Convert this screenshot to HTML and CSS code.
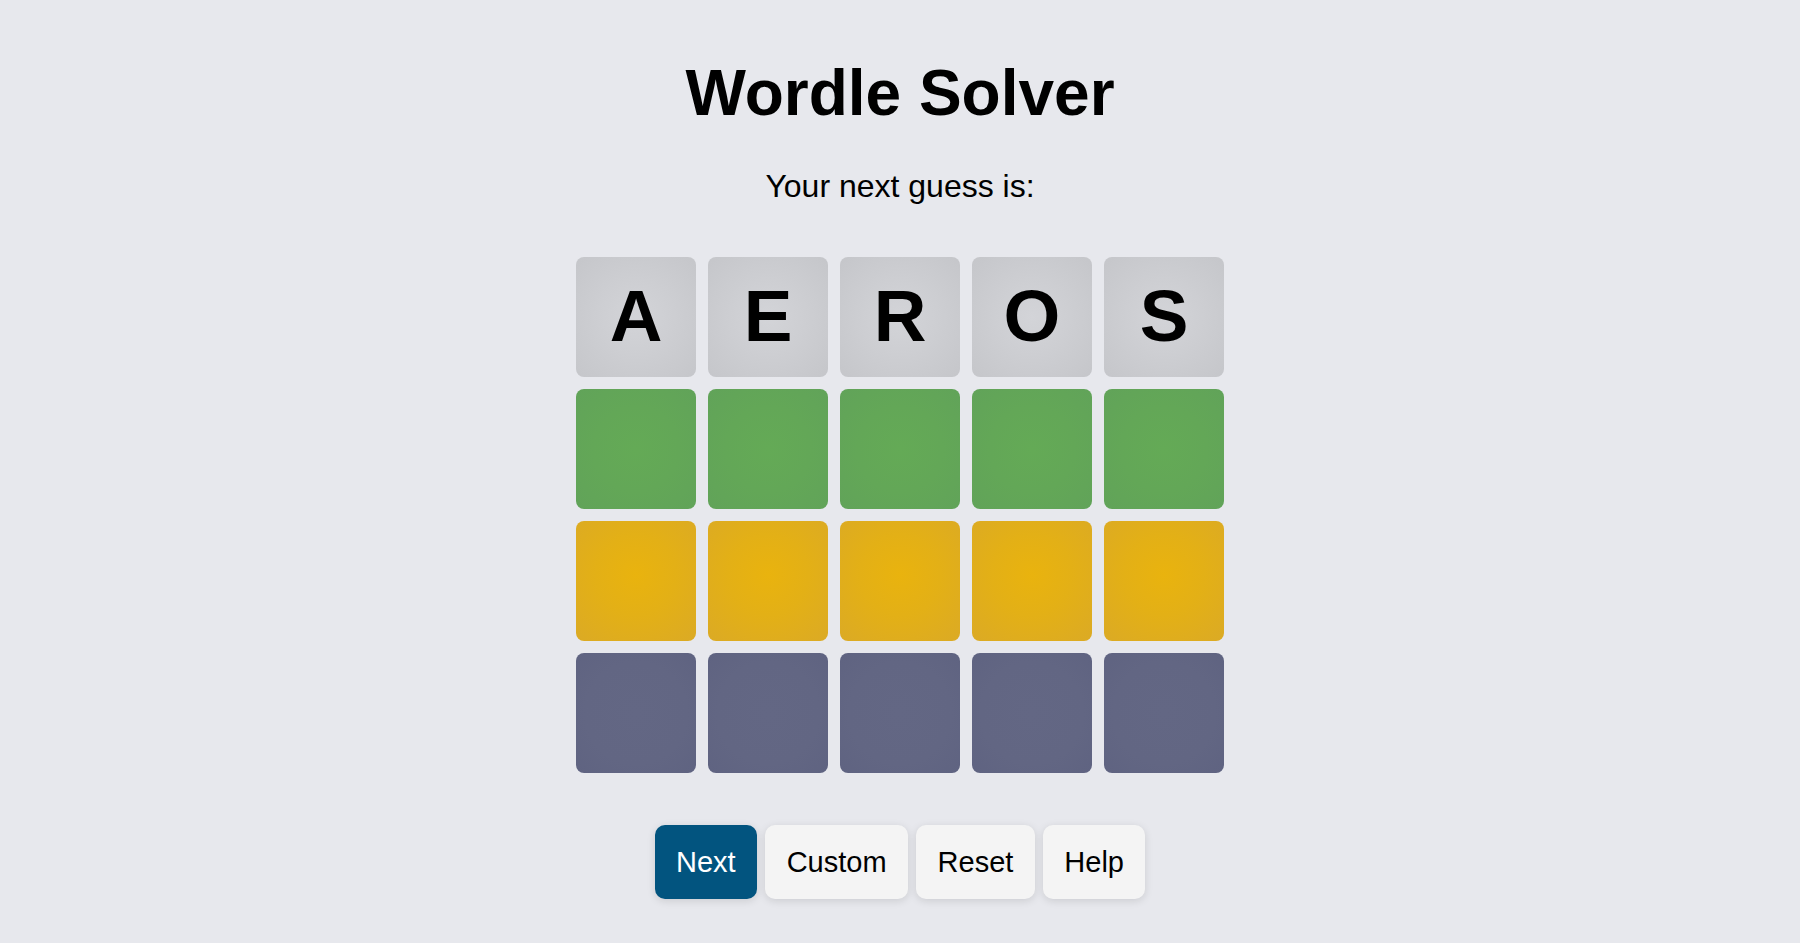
FILE: index.html
```html
<!DOCTYPE html>
<html lang="en">
<head>
<meta charset="utf-8">
<title>Wordle Solver</title>
<link rel="stylesheet" href="styles.css">
</head>
<body>
<main class="app">
  <h1 class="title">Wordle Solver</h1>
  <p class="subtitle">Your next guess is:</p>
  <div class="board">
    <div class="tile tile-grey">A</div>
    <div class="tile tile-grey">E</div>
    <div class="tile tile-grey">R</div>
    <div class="tile tile-grey">O</div>
    <div class="tile tile-grey">S</div>
    <div class="tile tile-green"></div>
    <div class="tile tile-green"></div>
    <div class="tile tile-green"></div>
    <div class="tile tile-green"></div>
    <div class="tile tile-green"></div>
    <div class="tile tile-yellow"></div>
    <div class="tile tile-yellow"></div>
    <div class="tile tile-yellow"></div>
    <div class="tile tile-yellow"></div>
    <div class="tile tile-yellow"></div>
    <div class="tile tile-slate"></div>
    <div class="tile tile-slate"></div>
    <div class="tile tile-slate"></div>
    <div class="tile tile-slate"></div>
    <div class="tile tile-slate"></div>
  </div>
  <div class="actions">
    <button class="btn btn-primary">Next</button>
    <button class="btn">Custom</button>
    <button class="btn">Reset</button>
    <button class="btn">Help</button>
  </div>
</main>
</body>
</html>
```

FILE: styles.css
```css
html, body {
  margin: 0;
  padding: 0;
}
body {
  background: #e7e8ed;
  font-family: "Liberation Sans", Arial, sans-serif;
  color: #000;
  min-height: 943px;
}
.app {
  display: flex;
  flex-direction: column;
  align-items: center;
  padding-top: 57px;
}
.title {
  margin: 0;
  font-size: 64px;
  line-height: 72px;
  font-weight: 700;
}
.subtitle {
  margin: 39px 0 0;
  font-size: 32px;
  line-height: 36px;
  font-weight: 400;
}
.board {
  margin-top: 53px;
  display: grid;
  grid-template-columns: repeat(5, 120px);
  grid-auto-rows: 120px;
  gap: 12px;
}
.tile {
  box-sizing: border-box;
  border-radius: 8px;
  display: flex;
  align-items: center;
  justify-content: center;
  font-size: 73px;
  font-weight: 700;
  line-height: 1;
}
.tile-grey {
  padding-bottom: 4px;
  background: radial-gradient(circle at 50% 50%, #d3d4d8 0%, #cdced2 45%, #c5c6ca 100%);
}
.tile-green {
  background: radial-gradient(circle at 50% 50%, #64aa56 0%, #63a757 50%, #61a359 100%);
}
.tile-yellow {
  background: radial-gradient(circle at 50% 45%, #e9b30e 0%, #e3b016 45%, #dbaa25 100%);
}
.tile-slate {
  background: radial-gradient(circle at 50% 50%, #636784 0%, #626683 60%, #5f6381 100%);
}
.actions {
  margin-top: 52px;
  display: flex;
  gap: 8px;
}
.btn {
  height: 74px;
  padding: 0 21.5px;
  border: none;
  border-radius: 10px;
  background: #f4f4f4;
  color: #000;
  font-family: "Liberation Sans", Arial, sans-serif;
  font-size: 29px;
  box-shadow: 0 2px 8px rgba(0, 0, 0, 0.12);
  cursor: pointer;
}
.btn-primary {
  background: #02547f;
  color: #fff;
}
```
